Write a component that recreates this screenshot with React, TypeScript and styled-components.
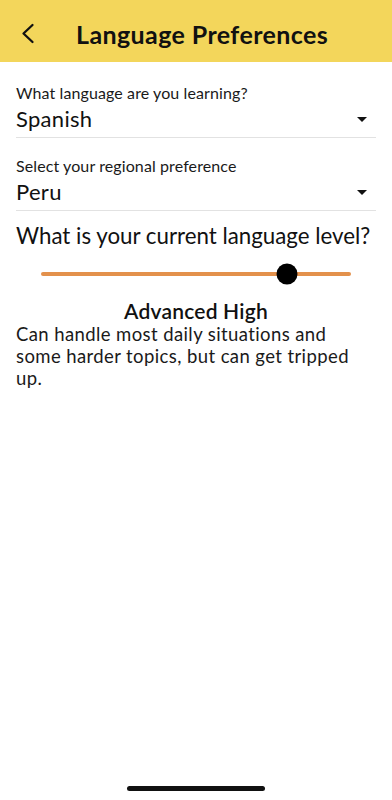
import React, { useState } from 'react';
import styled, { createGlobalStyle } from 'styled-components';

const GlobalStyle = createGlobalStyle`
  html, body {
    margin: 0;
    padding: 0;
    background: #ffffff;
  }
  body {
    font-family: Lato, 'Open Sans', sans-serif;
    color: #111111;
  }
`;

const Screen = styled.div`
  width: 392px;
  height: 800px;
  display: flex;
  flex-direction: column;
  position: relative;
  background: #ffffff;
  overflow: hidden;
`;

const Header = styled.header`
  height: 62px;
  background: #f3d65b;
  display: flex;
  align-items: center;
  padding: 5px 0 0 21px;
  gap: 35px;
  box-sizing: border-box;
`;

const BackButton = styled.button`
  width: 20px;
  height: 24px;
  padding: 0;
  border: none;
  background: transparent;
  display: flex;
  align-items: center;
  justify-content: flex-start;
  cursor: pointer;
`;

const Title = styled.h1`
  margin: 0;
  font-size: 25px;
  font-weight: 700;
  letter-spacing: 0.4px;
  color: #111111;
`;

const Content = styled.main`
  padding: 21px 16px 0;
  display: flex;
  flex-direction: column;
`;

const Field = styled.div`
  display: flex;
  flex-direction: column;
  border-bottom: 1.5px solid #e2e2e2;
  padding-bottom: 2px;
  margin-bottom: 18px;
`;

const FieldLabel = styled.label`
  font-size: 16px;
  line-height: 20px;
  letter-spacing: 0.1px;
  color: #1a1a1a;
`;

const SelectRow = styled.div`
  display: flex;
  align-items: center;
  justify-content: space-between;
`;

const SelectValue = styled.span`
  font-size: 22px;
  line-height: 32px;
  letter-spacing: 0.3px;
  color: #111111;
`;

const Caret = styled.span`
  width: 0;
  height: 0;
  margin-right: 9px;
  border-left: 5px solid transparent;
  border-right: 5px solid transparent;
  border-top: 5.5px solid #111111;
`;

const Question = styled.h2`
  margin: -4px 0 0;
  font-size: 22.3px;
  line-height: 22px;
  font-weight: 400;
  color: #111111;
`;

const SliderBox = styled.div`
  position: relative;
  height: 30px;
  margin: 12px 25px 0;
  display: flex;
  align-items: center;
`;

const Track = styled.div`
  width: 100%;
  height: 4px;
  border-radius: 2px;
  background: #e3914c;
`;

const Thumb = styled.div`
  position: absolute;
  top: 50%;
  width: 21px;
  height: 21px;
  border-radius: 50%;
  background: #000000;
  transform: translate(-50%, -50%);
`;

const LevelName = styled.h3`
  margin: 10px 0 0;
  text-align: center;
  font-size: 21px;
  line-height: 24px;
  font-weight: 600;
  letter-spacing: 0.2px;
  color: #111111;
`;

const LevelText = styled.p`
  margin: 0;
  font-size: 18.5px;
  line-height: 22px;
  letter-spacing: 0.4px;
  color: #1a1a1a;
`;

const HomeIndicator = styled.div`
  position: absolute;
  left: 50%;
  bottom: 9px;
  width: 138px;
  height: 5px;
  border-radius: 3px;
  background: #111111;
  transform: translateX(-50%);
`;

const fields = [
  { label: 'What language are you learning?', value: 'Spanish' },
  { label: 'Select your regional preference', value: 'Peru' },
];

export default function App() {
  const [level] = useState(0.795);

  return (
    <Screen>
      <GlobalStyle />
      <Header>
        <BackButton aria-label="Back">
          <svg width="14" height="21" viewBox="0 0 14 21" fill="none">
            <path d="M11.5 2 L2.5 10.5 L11.5 19" stroke="#111" strokeWidth="2.3" strokeLinecap="round" strokeLinejoin="round" />
          </svg>
        </BackButton>
        <Title>Language Preferences</Title>
      </Header>
      <Content>
        {fields.map((f) => (
          <Field key={f.label}>
            <FieldLabel>{f.label}</FieldLabel>
            <SelectRow>
              <SelectValue>{f.value}</SelectValue>
              <Caret />
            </SelectRow>
          </Field>
        ))}
        <Question>What is your current language level?</Question>
        <SliderBox>
          <Track />
          <Thumb style={{ left: `${level * 100}%` }} />
        </SliderBox>
        <LevelName>Advanced High</LevelName>
        <LevelText>
          Can handle most daily situations and some harder topics, but can get tripped up.
        </LevelText>
      </Content>
      <HomeIndicator />
    </Screen>
  );
}
